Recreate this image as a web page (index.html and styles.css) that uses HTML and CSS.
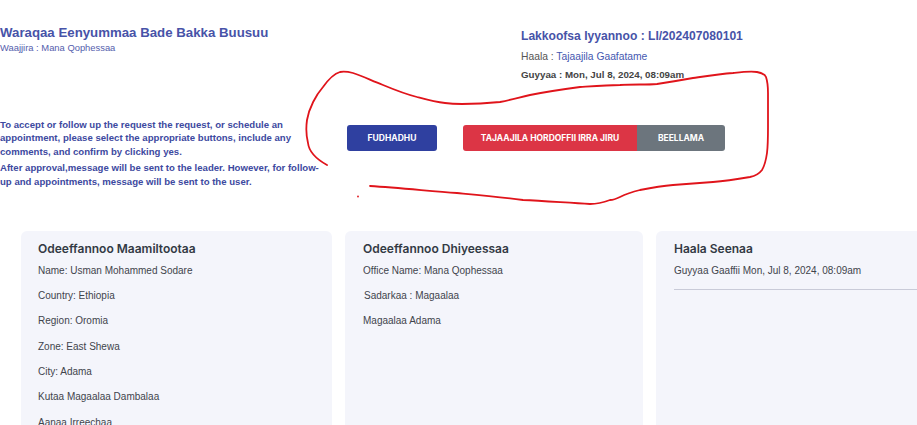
FILE: index.html
```html
<!DOCTYPE html>
<html lang="en">
<head>
<meta charset="utf-8">
<title>Waraqaa Eenyummaa Bade Bakka Buusuu</title>
<link rel="stylesheet" href="styles.css">
</head>
<body>
<div class="page">
  <header class="top">
    <div class="heading">
      <h1 class="title">Waraqaa Eenyummaa Bade Bakka Buusuu</h1>
      <p class="sub">Waajjira : Mana Qophessaa</p>
    </div>
    <div class="meta">
      <p class="meta-no">Lakkoofsa Iyyannoo : LI/202407080101</p>
      <p class="meta-status"><span class="lbl">Haala :</span> <span class="val">Tajaajila Gaafatame</span></p>
      <p class="meta-date">Guyyaa : Mon, Jul 8, 2024, 08:09am</p>
    </div>
  </header>

  <section class="action">
    <div class="note">
      <p>To accept or follow up the request the request, or schedule an appointment, please select the appropriate buttons, include any comments, and confirm by clicking yes.</p>
      <p>After approval,message will be sent to the leader. However, for follow-up and appointments, message will be sent to the user.</p>
    </div>
    <button class="btn btn-accept">FUDHADHU</button>
    <div class="btn-group">
      <button class="btn btn-follow">TAJAAJILA HORDOFFII IRRA JIRU</button>
      <button class="btn btn-appoint">BEELLAMA</button>
    </div>
  </section>

  <section class="cards">
    <div class="card card-a">
      <h2 class="card-title">Odeeffannoo Maamiltootaa</h2>
      <div class="items">
        <p>Name: Usman Mohammed Sodare</p>
        <p>Country: Ethiopia</p>
        <p>Region: Oromia</p>
        <p>Zone: East Shewa</p>
        <p>City: Adama</p>
        <p>Kutaa Magaalaa Dambalaa</p>
        <p>Aanaa Irreechaa</p>
      </div>
    </div>
    <div class="card card-b">
      <h2 class="card-title">Odeeffannoo Dhiyeessaa</h2>
      <div class="items">
        <p>Office Name: Mana Qophessaa</p>
        <p class="indent">Sadarkaa : Magaalaa</p>
        <p>Magaalaa Adama</p>
      </div>
    </div>
    <div class="card card-c">
      <h2 class="card-title">Haala Seenaa</h2>
      <div class="items">
        <p>Guyyaa Gaaffii Mon, Jul 8, 2024, 08:09am</p>
      </div>
      <hr class="rule">
    </div>
  </section>

  <svg class="scribble" width="917" height="425" viewBox="0 0 917 425" aria-hidden="true">
    <path d="M327,165 C318,160 309,152 308,143 C306,135 306,127 307,120 C309,108 316,95 323,87 C328,80 333,74 340,72 C345,71 349,72 353,73 C365,77 372,81 383,85 C395,90 405,94 417,97 C428,100 435,102 445,103 C452,104 456,104 462,104 C475,104 490,103 500,102 C515,99 520,97 530,95 C550,91 565,89 580,87 C595,86 608,85 620,85 C635,84 645,85 657,84 C670,82 682,80 693,78 C707,76 720,74 733,73 C742,72 750,71 757,72 C762,73 765,74 766,77 C768,83 768,88 768,93 C768,105 768,115 768,127 C768,136 768,145 767,153 C766,160 765,165 762,170 C759,174 755,176 750,177 C738,179 725,181 713,182 C700,183 686,184 673,185 C660,186 650,188 640,190 C632,192 626,194 620,197 C616,199 613,200 610,200 C602,203 596,204 590,204 C570,203 545,201 523,200 C500,197 478,195 457,193 C430,191 400,188 370,186" fill="none" stroke="#e0141b" stroke-width="1.8" stroke-linecap="round" stroke-linejoin="round"/>
    <circle cx="358" cy="196.5" r="0.9" fill="#e0141b"/>
  </svg>
</div>
</body>
</html>
```

FILE: styles.css
```css
html, body {
  margin: 0;
  padding: 0;
  background: #ffffff;
}

body {
  font-family: "Liberation Sans", Arial, sans-serif;
  color: #333;
}

.page {
  position: relative;
  width: 917px;
  height: 425px;
  overflow: hidden;
}

p, h1, h2 {
  margin: 0;
}

/* header */
.top {
  display: flex;
}

.heading {
  flex: 0 0 521px;
  padding-top: 25px;
}

.title {
  font-size: 13.25px;
  line-height: 16px;
  font-weight: bold;
  color: #4753a8;
}

.sub {
  margin-top: 0.6px;
  font-size: 9.4px;
  line-height: 11px;
  color: #5560ad;
}

.meta {
  padding-top: 29px;
}

.meta-no {
  font-size: 12.1px;
  line-height: 14px;
  font-weight: bold;
  color: #4753a8;
}

.meta-status {
  margin-top: 7.7px;
  font-size: 10.3px;
  line-height: 12px;
}

.meta-status .lbl {
  color: #555;
}

.meta-status .val {
  color: #4558b0;
}

.meta-date {
  margin-top: 6.3px;
  font-size: 9.75px;
  line-height: 11px;
  font-weight: bold;
  color: #444;
}

/* action row */
.action {
  display: flex;
  align-items: flex-start;
  margin-top: 37.6px;
}

.note {
  flex: 0 0 327px;
  font-size: 9.6px;
  line-height: 13.5px;
  font-weight: bold;
  color: #3d49a0;
}

.note p + p {
  margin-top: 3px;
}

.btn {
  height: 26px;
  border: 0;
  padding: 0;
  font-family: Inter, "Liberation Sans", sans-serif;
  font-size: 8.5px;
  font-weight: 700;
  color: #ffffff;
  cursor: pointer;
}

.btn-accept {
  margin-top: 7.4px;
  margin-left: 20px;
  width: 90px;
  border-radius: 3px;
  background: #2f40a0;
}

.btn-group {
  display: flex;
  margin-top: 7.4px;
  margin-left: 26px;
}

.btn-follow {
  width: 174px;
  border-radius: 3px 0 0 3px;
  background: #dc3545;
}

.btn-appoint {
  width: 88px;
  border-radius: 0 3px 3px 0;
  background: #6c757d;
}

/* cards */
.cards {
  display: flex;
  gap: 13px;
  margin-top: 43px;
  padding-left: 21px;
}

.card {
  flex: 0 0 auto;
  height: 260px;
  box-sizing: border-box;
  padding: 10px 17px;
  border-radius: 6px;
  background: #f4f5fb;
}

.card-a { width: 311px; }
.card-b { width: 298px; padding-left: 18px; }
.card-c { width: 290px; padding-left: 18px; }

.card-title {
  font-family: Inter, "Liberation Sans", sans-serif;
  font-size: 12px;
  line-height: 16px;
  font-weight: 600;
  color: #333a44;
}

.items {
  display: flex;
  flex-direction: column;
  gap: 13.3px;
  margin-top: 7.7px;
  font-size: 10px;
  line-height: 12px;
  color: #3f444c;
}

.indent {
  padding-left: 1px;
}

.rule {
  margin: 12.5px 0 0;
  border: 0;
  border-top: 1px solid #c9cbd8;
}

/* hand-drawn annotation lying over the page */
.scribble {
  position: absolute;
  left: 0;
  top: 0;
  pointer-events: none;
}
```
